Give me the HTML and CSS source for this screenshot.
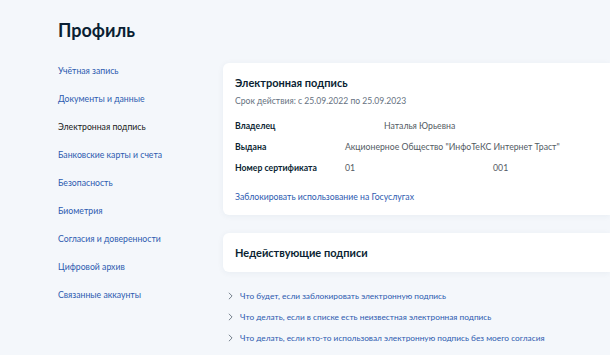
FILE: index.html
```html
<!DOCTYPE html>
<html lang="ru">
<head>
<meta charset="utf-8">
<title>Профиль</title>
<link rel="stylesheet" href="styles.css">
</head>
<body>
<div class="page">
  <h1 class="title">Профиль</h1>
  <div class="layout">
    <nav class="nav">
      <a class="nav-item">Учётная запись</a>
      <a class="nav-item">Документы и данные</a>
      <a class="nav-item active">Электронная подпись</a>
      <a class="nav-item">Банковские карты и счета</a>
      <a class="nav-item">Безопасность</a>
      <a class="nav-item">Биометрия</a>
      <a class="nav-item">Согласия и доверенности</a>
      <a class="nav-item">Цифровой архив</a>
      <a class="nav-item">Связанные аккаунты</a>
    </nav>
    <main class="main">
      <section class="card card-sign">
        <h2 class="card-title">Электронная подпись</h2>
        <div class="validity">Срок действия: с 25.09.2022 по 25.09.2023</div>
        <div class="rows">
          <div class="label">Владелец</div>
          <div class="value owner">Наталья Юрьевна</div>
          <div class="label">Выдана</div>
          <div class="value">Акционерное Общество "ИнфоТеКС Интернет Траст"</div>
          <div class="label">Номер сертификата</div>
          <div class="value serial"><span>01</span><span>001</span></div>
        </div>
        <a class="link">Заблокировать использование на Госуслугах</a>
      </section>
      <section class="card card-inactive">
        <h2 class="card-title">Недействующие подписи</h2>
      </section>
      <ul class="faq">
        <li class="faq-item"><svg class="chev" viewBox="0 0 6 10" width="5" height="8"><path d="M1 1l4 4-4 4" fill="none" stroke="#66727f" stroke-width="1.1"/></svg>Что будет, если заблокировать электронную подпись</li>
        <li class="faq-item"><svg class="chev" viewBox="0 0 6 10" width="5" height="8"><path d="M1 1l4 4-4 4" fill="none" stroke="#66727f" stroke-width="1.1"/></svg>Что делать, если в списке есть неизвестная электронная подпись</li>
        <li class="faq-item"><svg class="chev" viewBox="0 0 6 10" width="5" height="8"><path d="M1 1l4 4-4 4" fill="none" stroke="#66727f" stroke-width="1.1"/></svg>Что делать, если кто-то использовал электронную подпись без моего согласия</li>
      </ul>
    </main>
  </div>
</div>
</body>
</html>
```
FILE: styles.css
```css
html, body {
  margin: 0;
  padding: 0;
}
body {
  width: 610px;
  height: 355px;
  overflow: hidden;
  background: #f4f7fb;
  font-family: Lato, "Noto Sans", sans-serif;
  color: #0b1f33;
}
.page {
  padding: 19px 0 0 58px;
}
.title {
  margin: 0;
  font-size: 18px;
  font-weight: 700;
  line-height: 22px;
  color: #0b1f33;
}
.layout {
  display: flex;
  margin-top: 22px;
}
.nav {
  width: 165px;
  flex: none;
  display: flex;
  flex-direction: column;
  padding-top: 2px;
}
.nav-item {
  font-size: 8.7px;
  line-height: 12px;
  height: 28px;
  color: #2d5bb0;
}
.nav-item.active {
  color: #1a1a1a;
}
.main {
  flex: 1;
  min-width: 0;
}
.card {
  background: #fff;
  border-radius: 6px 0 0 6px;
  box-shadow: 0 1px 6px rgba(30, 60, 110, 0.06);
  padding: 0 12px;
}
.card-sign {
  padding-top: 13px;
  padding-bottom: 12px;
}
.card-title {
  margin: 0;
  font-size: 11px;
  font-weight: 700;
  line-height: 14px;
  color: #0b1f33;
}
.validity {
  margin-top: 5px;
  font-size: 8.6px;
  line-height: 12px;
  color: #66727f;
}
.rows {
  display: grid;
  grid-template-columns: 110px 1fr;
  row-gap: 9px;
  margin-top: 13px;
  font-size: 8.7px;
  line-height: 12px;
}
.label {
  font-weight: 700;
  color: #0b1f33;
}
.value {
  color: #535b63;
}
.owner {
  padding-left: 39px;
}
.serial {
  display: flex;
  gap: 138px;
}
.link {
  display: block;
  margin-top: 17px;
  font-size: 8.7px;
  line-height: 12px;
  color: #2d5bb0;
}
.card-inactive {
  margin-top: 18px;
  height: 39px;
  display: flex;
  align-items: center;
}
.faq {
  list-style: none;
  margin: 13px 0 0;
  padding: 0 0 0 5px;
}
.faq-item {
  display: flex;
  align-items: center;
  height: 21px;
  font-size: 8.3px;
  color: #2d5bb0;
}
.chev {
  margin-right: 7px;
  flex: none;
}
```
